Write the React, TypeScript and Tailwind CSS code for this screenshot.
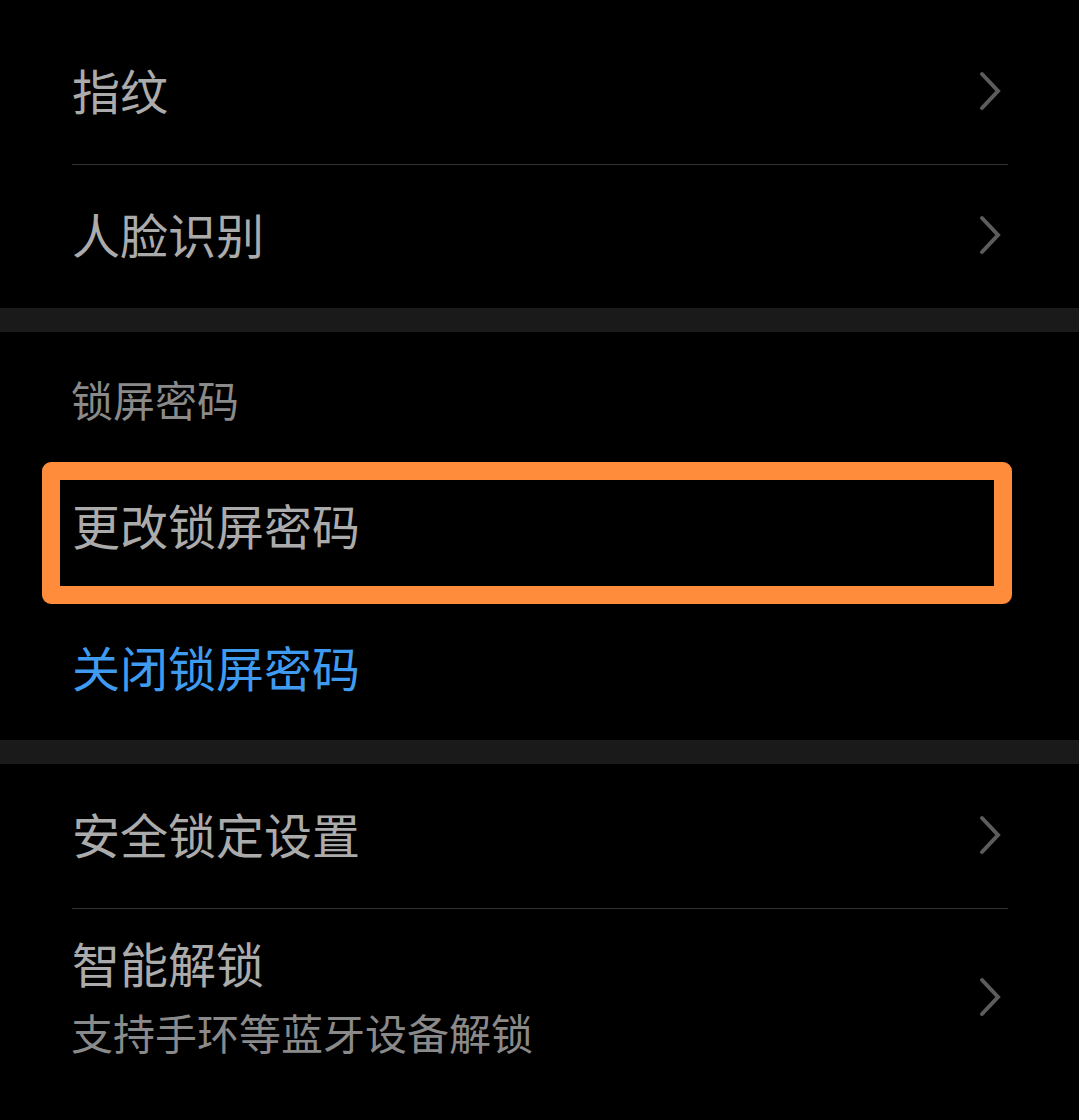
import React from "react";

const Chevron = () => (
  <svg width="24" height="42" viewBox="0 0 24 42" className="shrink-0 mr-[6px] mb-[3px]">
    <polyline
      points="4,4 20,21 4,38"
      fill="none"
      stroke="#5c5c5c"
      strokeWidth="4"
      strokeLinecap="round"
      strokeLinejoin="miter"
    />
  </svg>
);

const Row = ({ label, h = "h-[143px]" }: { label: string; h?: string }) => (
  <div className={`flex items-center justify-between ${h}`}>
    <span className="text-[48px] leading-none text-[#ababab] mb-[7px]">{label}</span>
    <Chevron />
  </div>
);

export default function App() {
  return (
    <div
      className="w-[1079px] h-[1120px] bg-black overflow-hidden"
      style={{ fontFamily: '"Noto Sans CJK SC", "Noto Sans", sans-serif' }}
    >
      <div className="pt-[21px] ml-[72px] mr-[71px]">
        <Row label="指纹" />
        <div className="h-px bg-[#333333]" />
        <Row label="人脸识别" h="h-[143px]" />
      </div>
      <div className="h-[24px] bg-[#1a1a1a]" />
      <div>
        <div className="h-[125px] pt-[15px] flex items-center ml-[71px]">
          <span className="text-[42px] leading-none text-[#8a8a8a] mb-[7px]">锁屏密码</span>
        </div>
        <div className="relative h-[141px] flex items-center">
          <span className="ml-[72px] text-[48px] leading-none text-[#ababab] mb-[7px]">更改锁屏密码</span>
          <div className="absolute left-[42px] top-[5px] w-[970px] h-[142px] border-[18px] border-[#ff8c3b] rounded-[9px]" />
        </div>
        <div className="h-[142px] flex items-center">
          <span className="ml-[72px] text-[48px] leading-none text-[#3f9bf0] mb-[7px]">关闭锁屏密码</span>
        </div>
      </div>
      <div className="h-[24px] bg-[#1a1a1a]" />
      <div className="ml-[72px] mr-[71px]">
        <Row label="安全锁定设置" h="h-[144px]" />
        <div className="h-px bg-[#333333]" />
        <div className="flex items-center justify-between pt-[25px]">
          <div className="flex flex-col -mt-[4px]">
            <span className="text-[48px] leading-[64px] text-[#ababab]">智能解锁</span>
            <span className="mt-[8px] text-[42px] leading-[60px] text-[#8a8a8a] -ml-[1px]">支持手环等蓝牙设备解锁</span>
          </div>
          <Chevron />
        </div>
      </div>
    </div>
  );
}
